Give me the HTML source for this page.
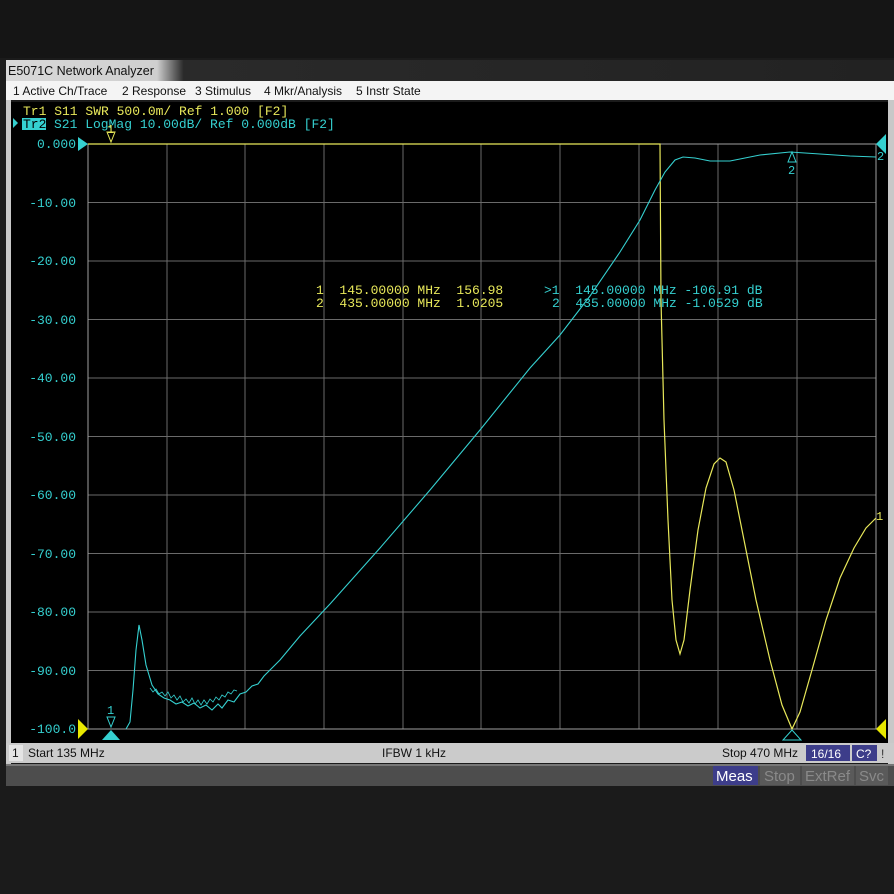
<!DOCTYPE html>
<html><head><meta charset="utf-8"><style>
html,body{margin:0;padding:0;background:#1b1b1b;width:894px;height:894px;overflow:hidden}
svg{display:block}
</style></head><body>
<svg width="894" height="894" viewBox="0 0 894 894" xmlns="http://www.w3.org/2000/svg">
<defs>
<linearGradient id="tb" x1="0" y1="0" x2="1" y2="0"><stop offset="0" stop-color="#d8d8d8"/><stop offset="0.17" stop-color="#cfcfcf"/><stop offset="0.2" stop-color="#2a2a2a"/><stop offset="1" stop-color="#222"/></linearGradient>
</defs>
<rect width="894" height="894" fill="#1b1b1b"/>
<rect x="0" y="0" width="894" height="58" fill="#151515"/>
<rect x="6" y="60" width="888" height="21" fill="url(#tb)"/>
<text x="8" y="75" font-family="Liberation Sans, sans-serif" font-size="12.5" fill="#111">E5071C Network Analyzer</text>
<rect x="6" y="81" width="888" height="19" fill="#f4f4f4"/>
<g font-family="Liberation Sans, sans-serif" font-size="12" fill="#111">
<text x="13" y="95">1 Active Ch/Trace</text><text x="122" y="95">2 Response</text><text x="195" y="95">3 Stimulus</text><text x="264" y="95">4 Mkr/Analysis</text><text x="356" y="95">5 Instr State</text>
</g>
<rect x="6" y="100" width="5" height="665" fill="#c8c8c8"/>
<rect x="888" y="100" width="6" height="665" fill="#c8c8c8"/>
<rect x="11" y="102" width="877" height="641" fill="#000"/>
<g stroke="#6a6a6a" stroke-width="1">
<line x1="167" y1="144" x2="167" y2="729"/><line x1="245" y1="144" x2="245" y2="729"/><line x1="324" y1="144" x2="324" y2="729"/><line x1="403" y1="144" x2="403" y2="729"/><line x1="481" y1="144" x2="481" y2="729"/><line x1="560" y1="144" x2="560" y2="729"/><line x1="639" y1="144" x2="639" y2="729"/><line x1="718" y1="144" x2="718" y2="729"/><line x1="797" y1="144" x2="797" y2="729"/>
<line x1="88" y1="202.5" x2="876" y2="202.5"/><line x1="88" y1="261" x2="876" y2="261"/><line x1="88" y1="319.5" x2="876" y2="319.5"/><line x1="88" y1="378" x2="876" y2="378"/><line x1="88" y1="436.5" x2="876" y2="436.5"/><line x1="88" y1="495" x2="876" y2="495"/><line x1="88" y1="553.5" x2="876" y2="553.5"/><line x1="88" y1="612" x2="876" y2="612"/><line x1="88" y1="670.5" x2="876" y2="670.5"/>
</g>
<rect x="88" y="144" width="788" height="585" fill="none" stroke="#a0a0a0" stroke-width="1"/>
<g font-family="Liberation Mono, monospace" font-size="13">
<text x="23" y="115" fill="#e8e85a">Tr1 S11 SWR 500.0m/ Ref 1.000 [F2]</text>
<rect x="22" y="118" width="24" height="12" fill="#35d0d0"/>
<text x="23" y="128" fill="#000">Tr2</text>
<text x="54" y="128" fill="#35d0d0">S21 LogMag 10.00dB/ Ref 0.000dB [F2]</text>
</g>
<polygon points="13,118 18,123 13,128" fill="#35d0d0"/>
<g font-family="Liberation Mono, monospace" font-size="13" fill="#35d0d0" text-anchor="end">
<text x="76" y="148">0.000</text><text x="76" y="207">-10.00</text><text x="76" y="265">-20.00</text><text x="76" y="324">-30.00</text><text x="76" y="382">-40.00</text><text x="76" y="441">-50.00</text><text x="76" y="499">-60.00</text><text x="76" y="558">-70.00</text><text x="76" y="616">-80.00</text><text x="76" y="675">-90.00</text><text x="76" y="733">-100.0</text>
</g>
<polygon points="78,137 88,144 78,151" fill="#35d0d0"/>
<polygon points="78,719 88,729 78,739" fill="#e8e800"/>
<polygon points="886,134 876,144 886,154" fill="#35d0d0"/>
<polygon points="886,719 876,729 886,739" fill="#e8e800"/>
<g font-family="Liberation Mono, monospace" font-size="13" fill="#e8e85a">
<text x="316" y="294" xml:space="preserve">1  145.00000 MHz  156.98</text>
<text x="316" y="307" xml:space="preserve">2  435.00000 MHz  1.0205</text>
</g>
<g font-family="Liberation Mono, monospace" font-size="13" fill="#35d0d0">
<text x="544" y="294" xml:space="preserve">&gt;1  145.00000 MHz -106.91 dB</text>
<text x="552" y="307" xml:space="preserve">2  435.00000 MHz -1.0529 dB</text>
</g>
<path d="M88,144 L659,144 L660,144 L661,300 L664,420 L668,520 L672,600 L676,640 L680,654 L684,640 L690,590 L698,530 L706,488 L714,464 L720,458 L726,462 L734,490 L744,540 L756,600 L770,660 L782,705 L792,729 L800,712 L812,670 L826,620 L840,578 L854,548 L866,528 L876,518" fill="none" stroke="#e8e85a" stroke-width="1.2"/>
<path d="M126,729 L130,722 L133,690 L136,650 L139,625 L142,640 L146,665 L152,685 L158,694 L164,698 L170,700 L176,704 L182,702 L188,706 L194,703 L200,708 L206,705 L212,710 L218,704 L222,708 L228,700 L234,702 L240,694 L246,692 L252,686 L258,684 L264,676 L270,670 L280,660 L300,636 L330,604 L380,548 L430,490 L480,430 L530,368 L560,335 L590,296 L620,252 L640,220 L655,190 L665,172 L675,160 L683,157 L695,158 L710,161 L730,161 L760,155 L790,152 L820,154 L850,156 L876,157" fill="none" stroke="#35d0d0" stroke-width="1.1"/>
<path d="M150,688 l3,4 l3,-3 l3,5 l3,-2 l3,4 l3,-4 l3,6 l3,-3 l3,5 l3,-4 l3,6 l3,-3 l3,4 l3,-5 l3,6 l3,-4 l3,5 l3,-5 l3,4 l3,-5 l3,3 l3,-5 l3,3 l3,-5 l3,2 l3,-5 l3,2 l3,-4 l3,1" fill="none" stroke="#35d0d0" stroke-width="0.8"/>
<text x="107" y="714" font-family="Liberation Mono, monospace" font-size="12" fill="#35d0d0">1</text>
<polygon points="107,717 115,717 111,727" fill="none" stroke="#35d0d0"/>
<polygon points="102,740 111,730 120,740" fill="#35d0d0"/>
<text x="107" y="133" font-family="Liberation Mono, monospace" font-size="12" fill="#e8e85a">1</text>
<polygon points="107,132 115,132 111,142" fill="none" stroke="#e8e85a"/>
<polygon points="788,162 796,162 792,152" fill="none" stroke="#35d0d0"/>
<text x="788" y="174" font-family="Liberation Mono, monospace" font-size="12" fill="#35d0d0">2</text>
<text x="877" y="160" font-family="Liberation Mono, monospace" font-size="12" fill="#35d0d0">2</text>
<text x="876" y="520" font-family="Liberation Mono, monospace" font-size="12" fill="#e8e85a">1</text>
<polygon points="783,740 792,730 801,740" fill="none" stroke="#35d0d0"/>
<rect x="6" y="743" width="888" height="20" fill="#cbcbcb"/>
<rect x="9" y="745" width="14" height="16" fill="#e4e4e4"/>
<g font-family="Liberation Sans, sans-serif" font-size="12" fill="#111">
<text x="12" y="757">1</text><text x="28" y="757">Start 135 MHz</text><text x="382" y="757">IFBW 1 kHz</text><text x="722" y="757">Stop 470 MHz</text>
</g>
<rect x="806" y="745" width="44" height="16" fill="#3d3d8a"/><text x="811" y="758" font-family="Liberation Sans, sans-serif" font-size="12" fill="#fff">16/16</text>
<rect x="852" y="745" width="25" height="16" fill="#3d3d8a"/><text x="856" y="758" font-family="Liberation Sans, sans-serif" font-size="12" fill="#fff">C?</text>
<text x="881" y="758" font-family="Liberation Sans, sans-serif" font-size="12" fill="#333">!</text>
<rect x="6" y="764" width="888" height="22" fill="#4d4d4d"/>
<rect x="6" y="764" width="888" height="2" fill="#777"/>
<rect x="713" y="766" width="45" height="19" fill="#3d3d8a"/>
<g font-family="Liberation Sans, sans-serif" font-size="15">
<text x="716" y="781" fill="#fff">Meas</text>
<rect x="760" y="766" width="40" height="19" fill="#5a5a5a"/><text x="764" y="781" fill="#8a8a8a">Stop</text>
<rect x="802" y="766" width="52" height="19" fill="#5a5a5a"/><text x="805" y="781" fill="#8a8a8a">ExtRef</text>
<rect x="856" y="766" width="32" height="19" fill="#5a5a5a"/><text x="859" y="781" fill="#8a8a8a">Svc</text>
</g>
</svg>
</body></html>
